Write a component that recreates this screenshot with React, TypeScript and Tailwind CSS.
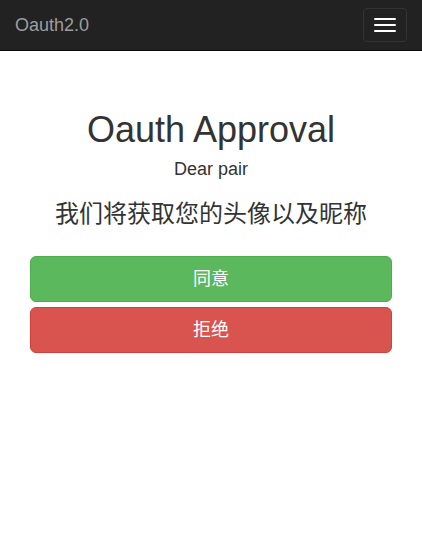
export default function App() {
  const font = { fontFamily: '"Liberation Sans", Arial, "Noto Sans CJK SC", sans-serif' };
  return (
    <div style={font} className="min-h-[555px] bg-white text-[#333]">
      {/* Navbar */}
      <nav className="flex h-[51px] items-start justify-between border-b border-[#080808] bg-[#222] px-[15px]">
        <span className="py-[15px] text-[18px] leading-[20px] text-[#9d9d9d]">Oauth2.0</span>
        <button className="mt-2 flex h-[34px] w-[44px] flex-col items-center justify-center gap-[4px] rounded-[4px] border border-[#333]">
          <span className="block h-[2px] w-[22px] rounded-[1px] bg-white" />
          <span className="block h-[2px] w-[22px] rounded-[1px] bg-white" />
          <span className="block h-[2px] w-[22px] rounded-[1px] bg-white" />
        </button>
      </nav>

      {/* Body */}
      <div className="flex flex-col items-center px-[30px] pt-[59px] text-center">
        <h1 className="text-[36px] leading-[39.6px] font-normal">Oauth Approval</h1>
        <h4 className="mt-[10px] text-[18px] leading-[19.8px] font-normal">Dear pair</h4>
        <h3 className="mt-[22px] text-[24px] leading-[26.4px] font-normal">我们将获取您的头像以及昵称</h3>
        <div className="mt-[28px] flex w-full flex-col gap-[5px]">
          <button className="h-[46px] w-full rounded-[6px] border border-[#4cae4c] bg-[#5cb85c] pt-[2px] text-[18px] text-white">
            同意
          </button>
          <button className="h-[46px] w-full rounded-[6px] border border-[#d43f3a] bg-[#d9534f] pt-[2px] text-[18px] text-white">
            拒绝
          </button>
        </div>
      </div>
    </div>
  );
}
